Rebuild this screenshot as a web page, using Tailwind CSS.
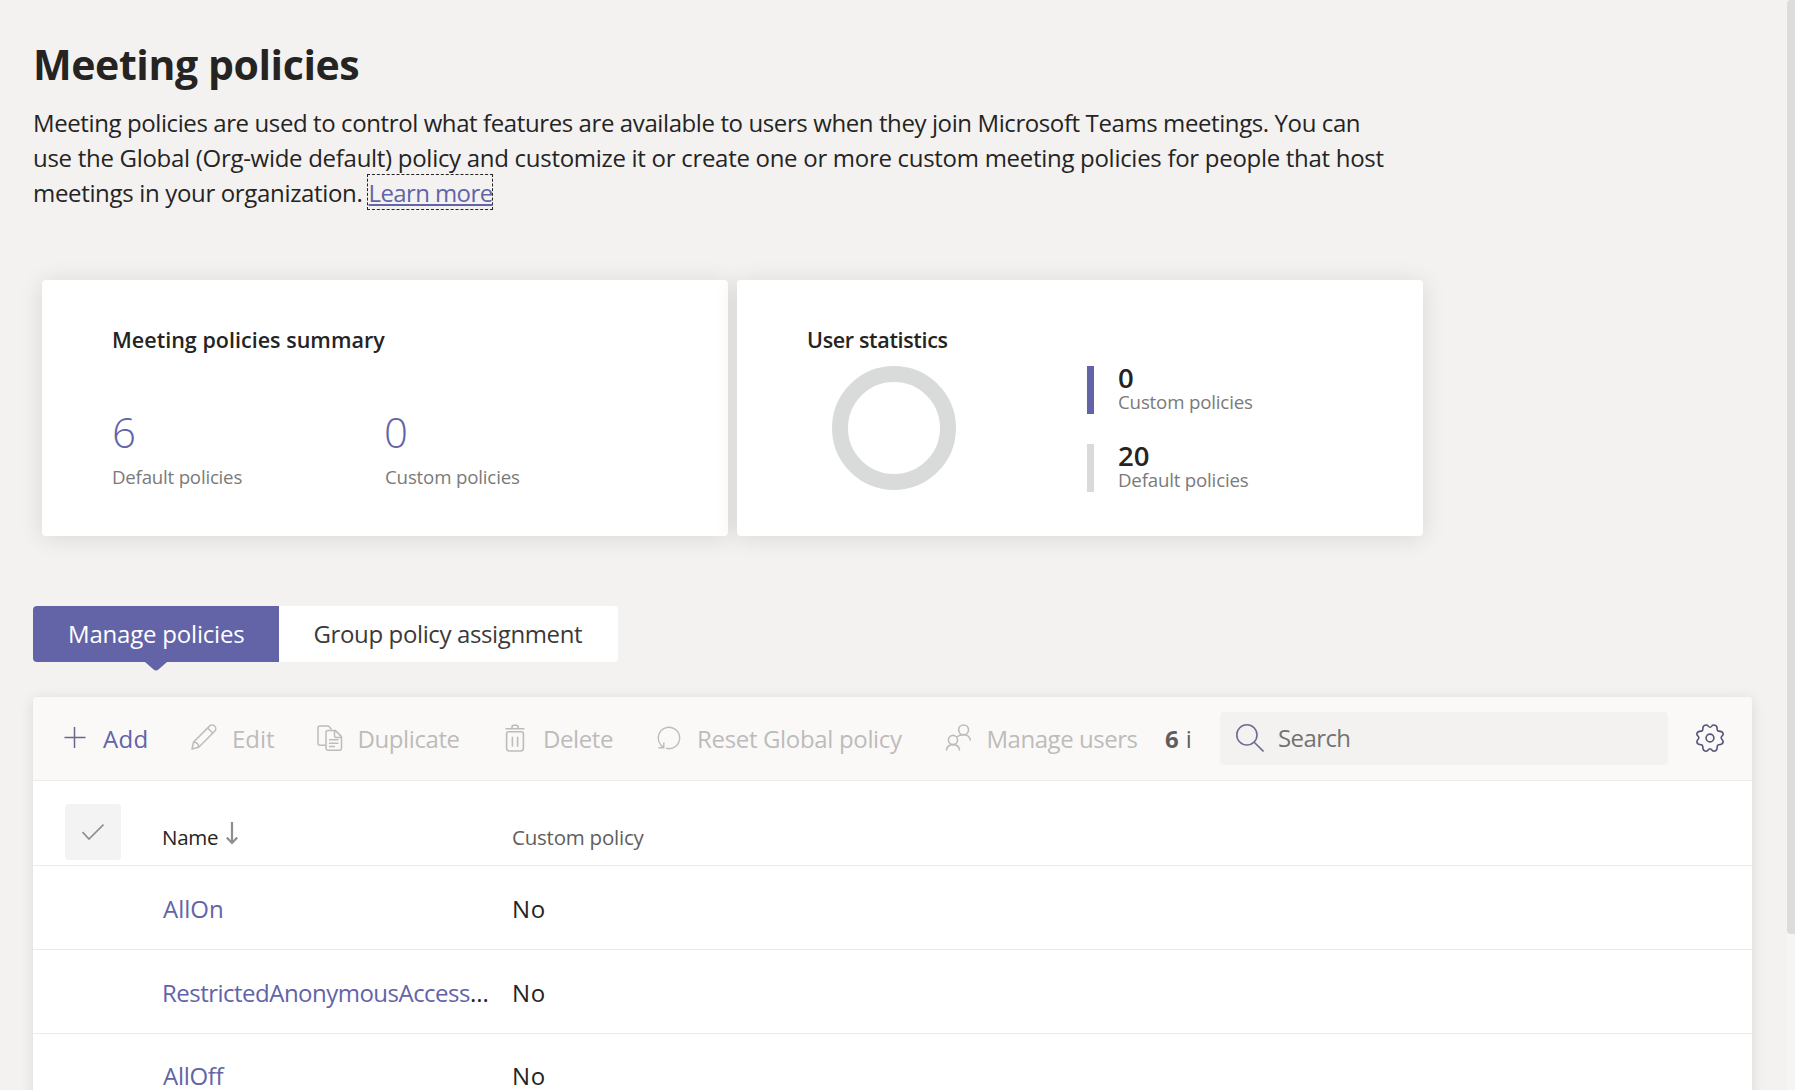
<!DOCTYPE html>
<html lang="en">
<head>
<meta charset="utf-8">
<title>Meeting policies</title>
<script src="https://cdn.jsdelivr.net/npm/@tailwindcss/browser@4"></script>
</head>
<body class="relative h-[1090px] overflow-hidden bg-[#f3f2f1] font-['Open_Sans',sans-serif] text-[#252423]">
<main class="flex w-[1752px] flex-col pt-9 pl-[33px]">
  <h1 class="text-[41px] leading-[56px] font-bold tracking-[-0.4px] whitespace-nowrap">Meeting policies</h1>
  <p class="mt-[13px] text-2xl leading-[35px] whitespace-nowrap">
    <span class="block tracking-[-0.4px]">Meeting policies are used to control what features are available to users when they join Microsoft Teams meetings. You can</span>
    <span class="block tracking-[-0.29px]">use the Global (Org-wide default) policy and customize it or create one or more custom meeting policies for people that host</span>
    <span class="flex"><span class="tracking-[-0.334px]">meetings in your organization.</span><a class="-mt-px ml-[5px] h-9 w-[126px] border border-dashed border-[#252423] tracking-[-0.6px] text-[#6264a7] underline decoration-2 underline-offset-2">Learn more</a></span>
  </p>

  <section class="mt-[70px] ml-[9px] flex gap-[9px]">
    <div class="h-64 w-[686px] rounded bg-white pt-[45px] pl-[70px] shadow-[0_2px_24px_rgba(0,0,0,0.11)]">
      <h2 class="text-[21.5px] leading-[30px] font-semibold tracking-[0.02px]">Meeting policies summary</h2>
      <div class="mt-[52px] flex">
        <div class="w-[272px]">
          <div class="text-[42px] leading-[50px] font-light text-[#6264a7]">6</div>
          <div class="mt-[7px] text-[18.7px] leading-[25px] tracking-[-0.22px] text-[#7b7a79]">Default policies</div>
        </div>
        <div>
          <div class="text-[42px] leading-[50px] font-light text-[#6264a7]">0</div>
          <div class="mt-[7px] pl-px text-[18.7px] leading-[25px] tracking-[-0.176px] text-[#7b7a79]">Custom policies</div>
        </div>
      </div>
    </div>
    <div class="h-64 w-[686px] rounded bg-white pt-[45px] pl-[70px] shadow-[0_2px_24px_rgba(0,0,0,0.11)]">
      <h2 class="text-[21.5px] leading-[30px] font-semibold tracking-[-0.341px]">User statistics</h2>
      <div class="mt-[11px] flex">
        <svg class="ml-[25px] size-[124px]" viewBox="0 0 124 124" fill="none"><circle cx="62" cy="62" r="54" stroke="#d9dbda" stroke-width="16"/></svg>
        <div class="ml-[131px] flex flex-col gap-[30px]">
          <div class="flex h-12">
            <div class="w-[7px] bg-[#6264a7]"></div>
            <div class="ml-6">
              <div class="text-[27.5px] leading-[24px] font-semibold">0</div>
              <div class="text-[18.7px] leading-[24px] tracking-[-0.176px] text-[#7b7a79]">Custom policies</div>
            </div>
          </div>
          <div class="flex h-12">
            <div class="w-[7px] bg-[#d9dbda]"></div>
            <div class="ml-6">
              <div class="text-[27.5px] leading-[24px] font-semibold">20</div>
              <div class="text-[18.7px] leading-[24px] tracking-[-0.2px] text-[#7b7a79]">Default policies</div>
            </div>
          </div>
        </div>
      </div>
    </div>
  </section>

  <nav class="mt-[70px] flex h-14 text-2xl leading-[56px] whitespace-nowrap">
    <div class="relative w-[246px] rounded-l bg-[#6264a7] pl-[35px] tracking-[-0.2px] text-white">Manage policies
      <svg class="absolute top-14 left-[111.500px] h-[9px] w-[22px]" viewBox="0 0 22 9" fill="#6264a7"><path d="M0 0h22L13.400 7.600q-2.400 2-4.800 0z"/></svg>
    </div>
    <div class="w-[339px] rounded-r bg-white pl-[34.5px] tracking-[-0.375px] text-[#3b3a39]">Group policy assignment</div>
  </nav>

  <section class="mt-[35px] h-[420px] w-[1719px] rounded-t bg-white shadow-[0_2px_14px_rgba(0,0,0,0.1)]">
    <div class="flex h-[84px] items-center rounded-t border-b border-[#edebe9] bg-[#faf9f8] pl-[31px] text-2xl whitespace-nowrap text-[#bdbcbb]">
      <div class="flex w-[127px] items-center">
        <svg class="-mt-0.5 size-[22px]" viewBox="0 0 22 22" fill="none" stroke="#6a6887" stroke-width="1.500"><path d="M.5 10.500h21M10.500 0v21"/></svg>
        <span class="ml-[17px] pt-px tracking-[0.3px] text-[#6264a7]">Add</span>
      </div>
      <div class="flex w-[126px] items-center">
        <svg class="size-[26px] -mt-1" viewBox="0 0 26 26" fill="none" stroke="currentColor" stroke-width="1.500" stroke-linejoin="round"><path d="M1 25l1.600-7L18.500 2.100a3.500 3.500 0 0 1 5.200 5.100L7.700 23.200zM16.600 4l5.300 5.200M2.600 18c3 .3 5 2.300 5.100 5.200"/></svg>
        <span class="ml-3.5 pt-px pl-px">Edit</span>
      </div>
      <div class="flex w-[187px] items-center">
        <svg class="-mt-0.5 size-[26px]" viewBox="0 0 26 26" fill="none" stroke="currentColor" stroke-width="1.500" stroke-linejoin="round"><path d="M9 20.300H3A2 2 0 0 1 1 18.300V3a2 2 0 0 1 2-2h8.500l3 3.200M11 5.600h7.500l6 6V23.300a2 2 0 0 1-2 2H11a2 2 0 0 1-2-2V7.600a2 2 0 0 1 2-2zM17.500 5.800V11a1.500 1.500 0 0 0 1.500 1.500h5.300M12 14.800h9.500M12 18.200h9.500M12 21.600h6"/></svg>
        <span class="ml-[13.5px] pt-px pl-px tracking-[-0.4px]">Duplicate</span>
      </div>
      <div class="flex w-[152px] items-center">
        <svg class="-mt-0.5 h-7 w-[22px]" viewBox="0 0 22 28" fill="none" stroke="currentColor" stroke-width="1.600"><path d="M1.500 4.800h19M8 4.800V3.200q0-1.900 1.900-1.900h2.300q1.900 0 1.900 1.900v1.600M2.600 9.800V24q0 3 3 3h10.800q3 0 3-3V9.800q0-2-2-2H4.600q-2 0-2 2zM8.400 12.800v10M13.600 12.800v10"/></svg>
        <span class="ml-[17px] pt-px tracking-[-0.396px]">Delete</span>
      </div>
      <div class="flex w-[289px] items-center">
        <svg class="-mt-0.5 ml-px size-6" viewBox="0 0 24 24" fill="none" stroke="currentColor" stroke-width="1.400"><path d="M9.200 22.300A10.700 10.700 0 1 0 4 19.100L6.500 21.700M1.500 21.700h5.300v-5.200"/></svg>
        <span class="ml-4 pt-px tracking-[-0.332px]">Reset Global policy</span>
      </div>
      <div class="flex w-[220px] items-center">
        <svg class="-mt-0.5 size-[27px]" viewBox="0 0 27 27" fill="none" stroke="currentColor" stroke-width="1.600" stroke-linecap="round"><circle cx="18.600" cy="5.900" r="4.900"/><circle cx="8" cy="16" r="4.600"/><path d="M1.500 26c.4-3.500 3-5.400 6.500-5.400s6.100 1.900 6.500 5.400M12.500 12.500c1.400-1.200 3.400-1.700 6-1.700 3.700 0 6 1.700 6.800 5.100"/></svg>
        <span class="ml-3.5 pt-px pl-[0.5px] tracking-[-0.469px]">Manage users</span>
      </div>
      <div class="w-[55px] pt-px text-[#605e5c]"><b>6</b><span class="ml-[7px]">i</span></div>
      <div class="mb-px flex h-[53px] w-[448px] items-center rounded bg-[#f3f2f1] pl-4 text-[#73726f]">
        <svg class="size-7" viewBox="0 0 28 28" fill="none" stroke="#6f6d8e" stroke-width="1.600"><circle cx="10.900" cy="10.900" r="10.100"/><path d="M18.200 18.300l9.300 9.200"/></svg>
        <span class="ml-3.5 tracking-[-0.6px]">Search</span>
      </div>
      <svg class="mb-0.5 ml-7 size-7" viewBox="0 0 28 28" fill="none" stroke="#56547a" stroke-width="1.600" stroke-linejoin="round"><circle cx="14" cy="14" r="3.900"/><path d="M14 3.300c1.700 0 1.800-2.300 3.400-2.300 2.200 0 3.500 1 3.700 2.800.100 1.700-.300 3.100 1.700 3.300 2 .100 3.500.100 4.200 2 .6 1.500-.1 2.200-1.100 3-.9.800-.9 2.200 0 3.200 1 1 1.500 1.800 1.100 3.300-.6 2-2.200 2.100-4.200 2.100-1.900.1-1.600 1.500-1.700 3.300-.1 2-1.400 3.200-3.700 3.200-1.500 0-1.600-2.400-3.400-2.400s-1.900 2.400-3.400 2.400c-2.300 0-3.600-1.200-3.700-3.200-.1-1.800.2-3.200-1.700-3.300-2 0-3.600-.1-4.200-2.100-.4-1.500.1-2.300 1.100-3.300.9-1 .9-2.400 0-3.200-1-.8-1.700-1.500-1.100-3 .7-1.900 2.200-1.900 4.200-2 2-.2 1.600-1.600 1.700-3.300C7 2 8.400 1 10.600 1c1.600 0 1.700 2.300 3.400 2.300z"/></svg>
    </div>

    <div class="flex h-[85px] border-b border-[#edebe9] text-[20.5px] leading-[28px]">
      <div class="mt-[23px] ml-8 flex size-14 items-center justify-center rounded bg-[#f3f3f3]">
        <svg class="h-4 w-[22px]" viewBox="0 0 22 16" fill="none" stroke="#8e8e8e" stroke-width="1.700"><path d="M.500 8l6.500 7L21.500.600"/></svg>
      </div>
      <div class="flex w-[391px] pt-[42px] pl-[41px]"><span class="tracking-[-0.268px]">Name</span>
        <svg class="-mt-px ml-2 h-[23px] w-3" viewBox="0 0 12 23" fill="none" stroke="#8e8e8e" stroke-width="2.200"><path d="M6 0v20.500M.800 15.500L6 21l5.200-5.500"/></svg>
      </div>
      <div class="pt-[42px] tracking-[-0.228px] text-[#605e5c]">Custom policy</div>
    </div>
    <div class="flex h-[84px] items-center border-b border-[#edebe9] pt-0.5 pl-[129px] text-2xl">
      <div class="w-[350px] pl-px text-[#6264a7]">AllOn</div><div class="tracking-[0.8px]">No</div>
    </div>
    <div class="flex h-[84px] items-center border-b border-[#edebe9] pt-0.5 pl-[129px] text-2xl">
      <div class="w-[350px]"><span class="tracking-[-0.514px] text-[#6264a7]">RestrictedAnonymousAccess</span>...</div><div class="tracking-[0.8px]">No</div>
    </div>
    <div class="flex h-[83px] items-center pl-[129px] text-2xl">
      <div class="w-[350px] pl-px tracking-[-0.3px] text-[#6264a7]">AllOff</div><div class="tracking-[0.8px]">No</div>
    </div>
  </section>
</main>
<div class="absolute top-0 right-0 h-full w-2 bg-[#f5f5f5]"><div class="h-[934px] rounded-l bg-[#dcdcdc]"></div></div>
</body>
</html>
